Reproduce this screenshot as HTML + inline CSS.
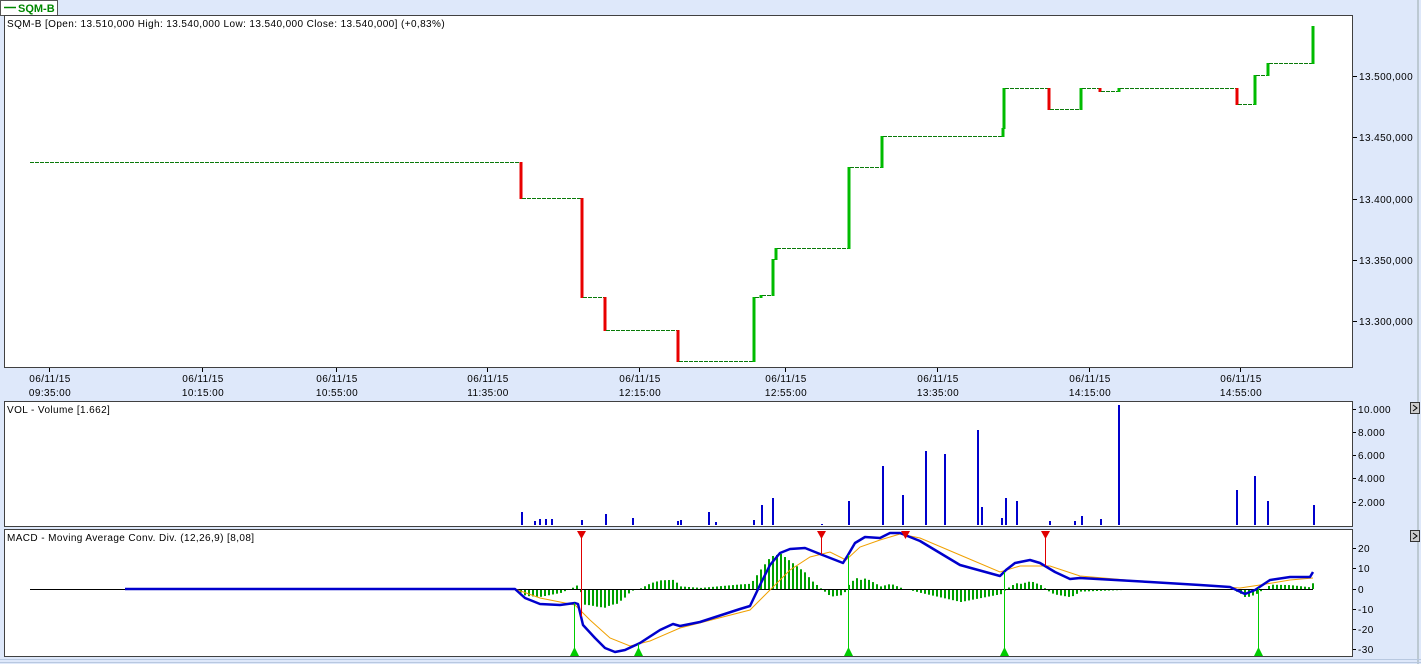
<!DOCTYPE html>
<html><head><meta charset="utf-8"><style>
html,body{margin:0;padding:0;width:1421px;height:664px;overflow:hidden;background:#dee8fa;font-family:"Liberation Sans",sans-serif}
svg{display:block}
text{font-family:"Liberation Sans",sans-serif;font-size:10px;fill:#000;letter-spacing:0.4px}
</style></head><body>
<svg id="s" width="1421" height="664" xmlns="http://www.w3.org/2000/svg">
<rect x="0" y="0" width="1421" height="664" fill="#dee8fa"/>
<line x1="1418" y1="0" x2="1418" y2="664" stroke="#9aa" stroke-width="1"/>
<rect x="0.5" y="0.5" width="57" height="15" fill="#fff" stroke="#555"/>
<line x1="4" y1="7.5" x2="16" y2="7.5" stroke="#080" stroke-width="1.5"/>
<text x="18" y="12" style="font-weight:bold;font-size:11px;fill:#080;letter-spacing:0">SQM-B</text>
<rect x="4.5" y="15.5" width="1348" height="352" fill="#fff" stroke="#404040"/>
<text x="7" y="27">SQM-B [Open: 13.510,000  High: 13.540,000  Low: 13.540,000  Close: 13.540,000] (+0,83%)</text>
<g id="price"></g>
<g id="paxis"></g>
<g id="xaxis"></g>
<rect x="4.5" y="401.5" width="1348" height="125" fill="#fff" stroke="#404040"/>
<text x="7" y="413">VOL - Volume [1.662]</text>
<g id="vol"></g>
<rect x="4.5" y="529.5" width="1348" height="127" fill="#fff" stroke="#404040"/>
<text x="7" y="541">MACD - Moving Average Conv. Div. (12,26,9) [8,08]</text>
<g id="macd"></g>
<line x1="0" y1="659.5" x2="1421" y2="659.5" stroke="#b8c8e0"/>
<line x1="0" y1="662.5" x2="1421" y2="662.5" stroke="#b8c8e0"/>
<rect x="1410.5" y="402.5" width="9" height="11" fill="#ccc" stroke="#333"/>
<path d="M1413 405 L1417 408 L1413 411" fill="none" stroke="#000"/>
<rect x="1410.5" y="530.5" width="9" height="11" fill="#ccc" stroke="#333"/>
<path d="M1413 533 L1417 536 L1413 539" fill="none" stroke="#000"/>
</svg>
<script>
var NS="http://www.w3.org/2000/svg";
function el(p,t,a,txt){var e=document.createElementNS(NS,t);for(var k in a)e.setAttribute(k,a[k]);if(txt!=null)e.textContent=txt;document.getElementById(p).appendChild(e);return e;}
var steps=[[520,162,198],[581,198,297],[604,297,330],[677,330,361],[753,361,297],[760,297,295],[772,295,259],[775,259,248],[848,248,167],[881,167,136],[1002,136,128],[1003,128,88],[1048,88,109],[1080,109,88],[1099,88,91],[1118,91,88],[1236,88,104],[1254,104,75],[1267,75,63],[1312,63,26]];
var px=30,py=162;
steps.forEach(function(s){
 el("price","line",{x1:px,y1:py+0.5,x2:s[0],y2:py+0.5,stroke:"#0a7a0a","stroke-dasharray":"4,1"});
 var red=s[2]>s[1];
 el("price","line",{x1:s[0]+1,y1:Math.min(s[1],s[2]),x2:s[0]+1,y2:Math.max(s[1],s[2])+1,stroke:red?"#e80000":"#00bb00","stroke-width":3});
 px=s[0]+2;py=s[2];
});
[["13.500,000",76],["13.450,000",137],["13.400,000",199],["13.350,000",260],["13.300,000",321]].forEach(function(a){
 el("paxis","line",{x1:1353,y1:a[1]+.5,x2:1357,y2:a[1]+.5,stroke:"#000"});
 el("paxis","text",{x:1359,y:a[1]+4},a[0]);
});
[[49,"09:35:00"],[202,"10:15:00"],[336,"10:55:00"],[487,"11:35:00"],[639,"12:15:00"],[785,"12:55:00"],[937,"13:35:00"],[1089,"14:15:00"],[1240,"14:55:00"]].forEach(function(a){
 el("xaxis","line",{x1:a[0]+.5,y1:368,x2:a[0]+.5,y2:372,stroke:"#000"});
 el("xaxis","text",{x:a[0]+1,y:382,"text-anchor":"middle"},"06/11/15");
 el("xaxis","text",{x:a[0]+1,y:396,"text-anchor":"middle"},a[1]);
});
[[521,512],[534,521],[539,519],[545,519],[551,519],[581,520],[605,514],[632,518],[677,521],[680,520],[708,512],[715,522],[753,520],[761,505],[772,498],[821,524],[848,501],[882,466],[902,495],[925,451],[944,454],[977,430],[981,507],[1001,518],[1005,498],[1016,501],[1049,521],[1074,521],[1081,516],[1100,519],[1118,405],[1236,490],[1254,476],[1267,501],[1313,505]].forEach(function(v){
 el("vol","rect",{x:v[0],y:v[1],width:2,height:525-v[1],fill:"#0000cc"});
});
[["10.000",409],["8.000",432],["6.000",455],["4.000",478],["2.000",502]].forEach(function(a){
 el("vol","line",{x1:1353,y1:a[1]+.5,x2:1356,y2:a[1]+.5,stroke:"#000"});
 el("vol","text",{x:1358,y:a[1]+4},a[0]);
});
[["20",548],["10",568],["0",589],["-10",609],["-20",629],["-30",649]].forEach(function(a){
 el("macd","line",{x1:1353,y1:a[1]+.5,x2:1356,y2:a[1]+.5,stroke:"#000"});
 el("macd","text",{x:1358,y:a[1]+4},a[0]);
});
var blue=[[125,589],[515,589],[525,598],[540,604],[560,605],[575,603],[578,604],[583,625],[595,638],[605,648],[615,652],[625,650],[640,643],[660,630],[673,624],[680,626],[700,622],[740,609],[750,606],[760,585],[770,565],[780,553],[790,549],[805,548],[820,554],[843,563],[848,555],[855,543],[865,537],[880,538],[890,533],[900,533],[920,541],[960,565],[1000,576],[1006,570],[1015,563],[1030,560],[1040,563],[1055,572],[1070,579],[1080,578],[1150,582],[1200,585],[1230,587],[1245,594],[1255,590],[1270,580],[1290,577],[1310,577],[1313,572]];
var org=[[125,589],[515,589],[540,598],[575,605],[590,620],[610,638],[630,646],[650,641],[680,628],[750,610],[765,595],[790,570],[810,557],[830,552],[846,560],[860,547],[880,540],[900,534],[920,538],[960,555],[1000,572],[1020,566],[1050,566],[1080,576],[1150,582],[1240,588],[1260,585],[1290,580],[1313,578]];
function interp(a,x){for(var i=1;i<a.length;i++){if(x<=a[i][0]){var t=(x-a[i-1][0])/(a[i][0]-a[i-1][0]);return a[i-1][1]+t*(a[i][1]-a[i-1][1]);}}return a[a.length-1][1];}
for(var x=520;x<=1313;x+=4){
 var h=(interp(org,x)-interp(blue,x))*1.3;
 if(Math.abs(h)<0.5)continue;
 var y=h>0?589-h:589;
 el("macd","rect",{x:x,y:y,width:2,height:Math.abs(h),fill:"#00a000"});
}
el("macd","line",{x1:30,y1:589.5,x2:1313,y2:589.5,stroke:"#000"});
function pts(a){return a.map(function(p){return p.join(",")}).join(" ");}
el("macd","polyline",{points:pts(org),fill:"none",stroke:"#f0a000","stroke-width":1});
el("macd","polyline",{points:pts(blue),fill:"none",stroke:"#0000cc","stroke-width":2.5,"stroke-linejoin":"round"});
[581,821,905,1045].forEach(function(x){
 el("macd","line",{x1:x+.5,y1:532,x2:x+.5,y2:interp(blue,x),stroke:"#e00000"});
 el("macd","path",{d:"M"+(x-4)+" 531 L"+(x+5)+" 531 L"+(x+.5)+" 539 Z",fill:"#e00000"});
});
[574,638,848,1004,1258].forEach(function(x){
 el("macd","line",{x1:x+.5,y1:interp(blue,x),x2:x+.5,y2:655,stroke:"#00cc00"});
 el("macd","path",{d:"M"+(x-4)+" 656 L"+(x+5)+" 656 L"+(x+.5)+" 647 Z",fill:"#00cc00"});
});
</script>
</body></html>
